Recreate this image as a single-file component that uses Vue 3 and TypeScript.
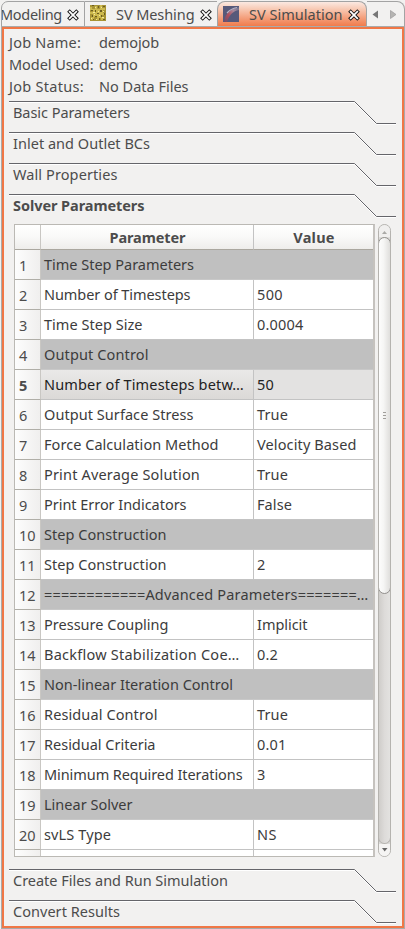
<script setup lang="ts">
import type { Directive } from 'vue'

type Label = [text: string, width: number]
interface Row { name: Label; value?: Label; current?: boolean }

// Spreads a label's letters so that it takes up the given advance width.
const vFit: Directive<HTMLElement, number> = {
  mounted(el, { value }) {
    const count = (el.textContent ?? '').length
    const natural = el.getBoundingClientRect().width
    el.style.letterSpacing = `${(value - natural) / count}px`
  },
}

const job: { key: Label; value: Label }[] = [
  { key: ['Job Name:', 72], value: ['demojob', 60] },
  { key: ['Model Used:', 84.5], value: ['demo', 38.5] },
  { key: ['Job Status:', 75], value: ['No Data Files', 89.5] },
]

const upper: Label[] = [
  ['Basic Parameters', 117],
  ['Inlet and Outlet BCs', 137],
  ['Wall Properties', 104.5],
  ['Solver Parameters', 131.5],
]
const lower: Label[] = [
  ['Create Files and Run Simulation', 215],
  ['Convert Results', 107],
]

const rows: Row[] = [
  { name: ['Time Step Parameters', 150] },
  { name: ['Number of Timesteps', 146.5], value: ['500', 26] },
  { name: ['Time Step Size', 98.5], value: ['0.0004', 46.5] },
  { name: ['Output Control', 104.5] },
  { name: ['Number of Timesteps betw…', 200], value: ['50', 17], current: true },
  { name: ['Output Surface Stress', 149.5], value: ['True', 31] },
  { name: ['Force Calculation Method', 174.5], value: ['Velocity Based', 99.5] },
  { name: ['Print Average Solution', 156], value: ['True', 31] },
  { name: ['Print Error Indicators', 142.5], value: ['False', 35] },
  { name: ['Step Construction', 122.5] },
  { name: ['Step Construction', 122.5], value: ['2', 9] },
  { name: ['============Advanced Parameters=======…', 324.5] },
  { name: ['Pressure Coupling', 124.5], value: ['Implicit', 50.5] },
  { name: ['Backflow Stabilization Coe…', 195.5], value: ['0.2', 21] },
  { name: ['Non-linear Iteration Control', 189] },
  { name: ['Residual Control', 113.5], value: ['True', 31] },
  { name: ['Residual Criteria', 111.5], value: ['0.01', 29.5] },
  { name: ['Minimum Required Iterations', 198.5], value: ['3', 9] },
  { name: ['Linear Solver', 88.5] },
  { name: ['svLS Type', 67], value: ['NS', 20] },
]
</script>

<template>
  <div class="window">
    <div class="tabs">
      <div class="tab first">
        <span v-fit="62">Modeling</span>
        <svg class="close" viewBox="0 0 12 12"><path class="o" d="M2.700 2.700 9.300 9.300M9.300 2.700 2.700 9.300" /><path class="i" d="M2.700 2.700 9.300 9.300M9.300 2.700 2.700 9.300" /></svg>
      </div>
      <div class="tab mesh">
        <svg class="pic" viewBox="0 0 16 16">
          <rect width="16" height="16" fill="#a89434" />
          <path d="M0 2h2v2h3V1h2v3h3V0h2v3h3v2h-2v3h2v2h-3v3h2v2h-3v-2H9v2H7v-3H4v3H1v-3h2V9H0V7h3V5H0z" fill="#cdb94e" />
          <path d="M2 0h2v1H2zM8 1h1v2H8zM13 1h2v1h-2zM1 5h2v1H1zM5 5h1v2H5zM10 5h2v2h-2zM7 8h2v1H7zM2 10h1v2H2zM5 11h2v1H5zM11 10h1v2h-1zM14 8h1v2h-1zM9 13h1v2H9zM3 14h1v1H3zM13 14h2v1h-2z" fill="#6b5c20" />
          <path d="M5 2h1v1H5zM11 2h1v1h-1zM3 7h2v1H3zM8 6h1v1H8zM13 6h1v1h-1zM9 10h1v1H9zM4 9h1v1H4zM1 13h1v1H1zM12 12h2v1h-2zM6 14h1v1H6z" fill="#f5ea98" />
        </svg>
        <span v-fit="78.5">SV Meshing</span>
        <svg class="close" viewBox="0 0 12 12"><path class="o" d="M2.700 2.700 9.300 9.300M9.300 2.700 2.700 9.300" /><path class="i" d="M2.700 2.700 9.300 9.300M9.300 2.700 2.700 9.300" /></svg>
      </div>
      <div class="tab active">
        <svg class="pic" viewBox="0 0 16 16">
          <defs>
            <linearGradient id="vessel" x1="0" y1="1" x2="1" y2="0">
              <stop offset="0" stop-color="#6c4c6c" /><stop offset=".4" stop-color="#b04f5c" /><stop offset=".7" stop-color="#a88a9c" /><stop offset="1" stop-color="#626a88" />
            </linearGradient>
          </defs>
          <rect width="16" height="16" fill="#57597a" />
          <path d="M1 16C2 8 7 3 16 1v3C10 5 6 9 4 16z" fill="url(#vessel)" />
          <path d="M4 7Q8 2.500 14 1.500" fill="none" stroke="#b9b4c6" stroke-width="1.200" />
        </svg>
        <span v-fit="93.5">SV Simulation</span>
        <svg class="close" viewBox="0 0 12 12"><path class="o" d="M2.700 2.700 9.300 9.300M9.300 2.700 2.700 9.300" /><path class="i" d="M2.700 2.700 9.300 9.300M9.300 2.700 2.700 9.300" /></svg>
      </div>
      <div class="arrows">
        <svg viewBox="0 0 38 24"><path d="M11 8.500v8L5.500 12.500z" fill="#777" /><path d="M23.500 8.500v8l5.500-4z" fill="#b5b4b2" stroke="#999" stroke-width=".7" /></svg>
      </div>
    </div>

    <div class="pane">
      <div class="job">
        <template v-for="j in job" :key="j.key[0]">
          <div><span v-fit="j.key[1]">{{ j.key[0] }}</span></div>
          <div><span v-fit="j.value[1]">{{ j.value[0] }}</span></div>
        </template>
      </div>

      <div v-for="(s, i) in upper" :key="s[0]" class="section" :class="{ open: i === 3 }">
        <svg class="edge" viewBox="0 0 388 25"><path class="light" d="M0 1.500H345.500L367.500 23.500H387" /><path class="dark" d="M0 .5H345.500L367.500 22.500H387" /></svg>
        <span v-fit="s[1]">{{ s[0] }}</span>
      </div>

      <div class="content">
        <div class="table">
          <div class="row head">
            <div class="num"></div>
            <div class="name"><span v-fit="76">Parameter</span></div>
            <div class="value"><span v-fit="41.500">Value</span></div>
          </div>
          <div v-for="(r, i) in rows" :key="i" class="row" :class="{ group: !r.value, current: r.current }">
            <div class="num"><span v-fit="i < 9 ? 8.500 : 16.500">{{ i + 1 }}</span></div>
            <div class="name"><span v-fit="r.name[1]">{{ r.name[0] }}</span></div>
            <div v-if="r.value" class="value"><span v-fit="r.value[1]">{{ r.value[0] }}</span></div>
          </div>
          <div class="row tail"><div class="num"></div><div class="name"></div><div class="value"></div></div>
        </div>
        <div class="scroll">
          <div class="step"><svg viewBox="0 0 11 12"><path d="M3 9h5L5.500 6z" fill="#aaa9a6" /></svg></div>
          <div class="thumb"><i></i><i></i><i></i></div>
          <div class="trough"></div>
          <div class="step down"><svg viewBox="0 0 11 12"><path d="M3 4h5.500L5.700 7.500z" fill="#666" /></svg></div>
        </div>
      </div>

      <div v-for="s in lower" :key="s[0]" class="section">
        <svg class="edge" viewBox="0 0 388 25"><path class="light" d="M0 1.500H345.500L367.500 23.500H387" /><path class="dark" d="M0 .5H345.500L367.500 22.500H387" /></svg>
        <span v-fit="s[1]">{{ s[0] }}</span>
      </div>
    </div>
  </div>
</template>

<style>
body { background: #f2f1f0; }
</style>

<style scoped>
* { box-sizing: border-box; }
.window {
  width: 405px; height: 929px; padding: 1px 0 1px 1px; overflow: hidden;
  display: flex; flex-direction: column;
  background: #f2f1f0; color: #4c4c4c;
  font: 14.500px/20px "Noto Sans", "Open Sans", sans-serif;
}
span { white-space: pre; display: inline-block; }
svg { display: block; flex: none; }
.tabs { display: flex; height: 26px; }
.tab { display: flex; align-items: center; border-top: 1px solid #a3a3a3; border-bottom: 1px solid #a3a3a3; }
.first { width: 84px; justify-content: flex-end; border-right: 1px solid #a3a3a3; padding-right: 5px; gap: 5px; overflow: hidden; border-left: 1px solid #a3a3a3; border-top-left-radius: 7px; }
.first span { flex: none; }
.mesh { width: 132px; padding-left: 5px; }
.mesh span, .active span { margin-left: 10px; }
.mesh .close { margin-left: 5px; }
.active .close { margin-left: 6px; }
.active {
  width: 150px; padding: 0 0 2px 5px; border: 1px solid #a3a3a3; border-bottom: 0; border-radius: 8px 8px 0 0;
  background: linear-gradient(#fbe9e2 0, #f8cdb9 25%, #f4a17e 62%, #f07746 100%);
}
.arrows { width: 38px; border: 1px solid #a3a3a3; border-left: 0; border-radius: 0 8px 0 0; }
.arrows svg { width: 38px; height: 24px; }
.pic { width: 16px; height: 16px; margin-bottom: 2px; }
.active .pic { margin-bottom: 0; }
.close { width: 12px; height: 12px; margin-top: 2px; }
.close path { fill: none; stroke-linecap: square; }
.o { stroke: #161616; stroke-width: 3.600; }
.i { stroke: #fff; stroke-width: 1.700; }
.pane {
  width: 402px; height: 901px; flex: none; margin: 0 1px; padding: 2px 6px 0 5px;
  border: 2px solid #f07746; outline: 1px solid #aaa;
}
.job { display: grid; grid-template-columns: 90px 1fr; grid-auto-rows: 22px; line-height: 22px; height: 70px; }
.section { position: relative; height: 31px; padding: 1px 0 0 4px; }
.edge { position: absolute; left: 0; top: 0; width: 388px; height: 25px; }
.edge path { fill: none; stroke-width: 1; }
.light { stroke: #fff; }
.dark { stroke: #65656a; }
.section span { position: relative; line-height: 20px; }
.open { height: 30px; font-weight: 700; }
.content { display: flex; gap: 3px; padding-left: 5px; height: 645px; }
.table { width: 361px; height: 633px; border: 1px solid #bbb9b4; border-right: 2px solid #c5c2be; background: #fff; overflow: hidden; color: #3c3c3c; }
.row { display: grid; grid-template-columns: 26px 213px 1fr; height: 30px; line-height: 29px; }
.row > div { border-bottom: 1px solid #c3c3c3; border-right: 1px solid #c3c3c3; padding-left: 3px; overflow: hidden; }
.row > div:last-child { border-right: 0; }
.row > .num { border-color: #b7b5ae #c9c7c3 #b0aea7 #fff; background: linear-gradient(90deg, #fdfdfd, #f0efee); padding: 1px 0 0 4px; color: #4c4c4c; }
.row span { line-height: 29px; }
.head { height: 25px; font-weight: 700; text-align: center; color: #4c4c4c; }
.row.head > div { background: linear-gradient(#fff, #f9f9f8 50%, #eeedeb); border-bottom-color: #aaa79f; padding-left: 1px; }
.row.head span { line-height: 24px; display: block; width: fit-content; margin: 0 auto; }
.group .name { grid-column: 2 / 4; background: #c0c0c0; border-bottom-color: #c8c8c8; }
.current .num { font-weight: 700; }
.current .name { background: linear-gradient(#eae9e8, #dbd9d7); color: #222; }
.current .value { background: #e3e2e1; color: #222; }
.tail { height: 7px; }
.scroll { width: 13px; height: 633px; border: 1px solid #b5b3af; border-radius: 7px; background: #dddcda; overflow: hidden; display: flex; flex-direction: column; }
.step { height: 12px; background: #f0efee; flex: none; }
.step svg { width: 11px; height: 12px; }
.thumb {
  position: relative; z-index: 1;
  height: 357px; flex: none; margin: 0 -1px; border: 1px solid #92908d; border-radius: 7px;
  background: linear-gradient(90deg, #fcfcfc, #f6f6f5 40%, #dfdedc);
  display: flex; flex-direction: column; align-items: center; justify-content: center; gap: 2px;
}
.thumb i { width: 3px; height: 1px; background: #a09e9b; }
.trough { flex: 1; background: linear-gradient(90deg, #cfcdca, #dddbd9 50%, #e3e2e0); border: 1px solid #b5b3af; border-top: 0; border-radius: 0 0 7px 7px; margin: -7px -1px 0; }
.down { background: #f5f4f3; }
</style>
